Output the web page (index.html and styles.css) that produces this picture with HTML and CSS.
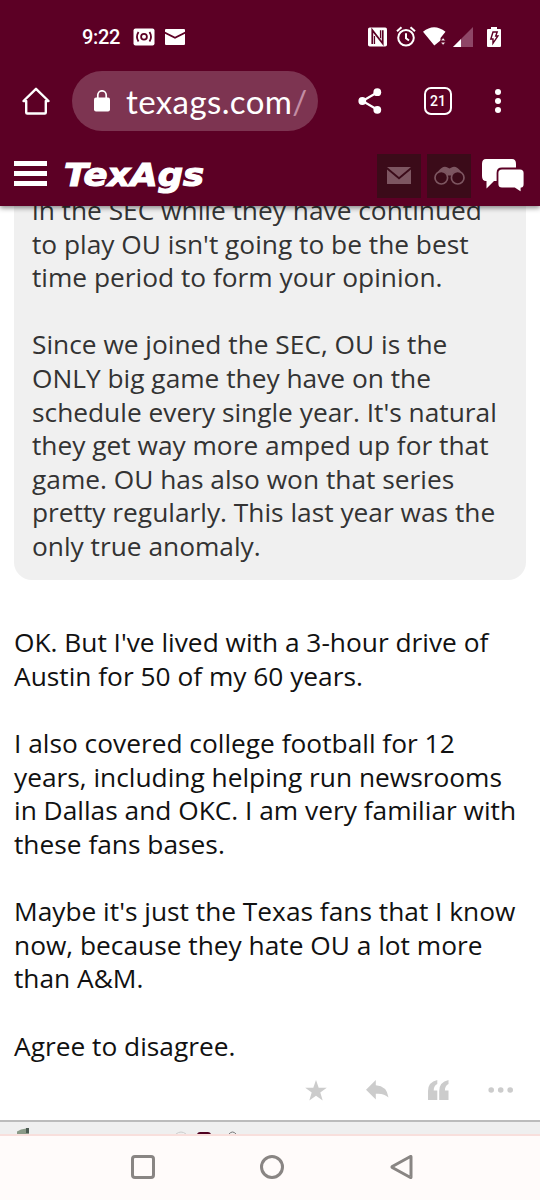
FILE: index.html
```html
<!DOCTYPE html>
<html lang="en">
<head>
  <meta charset="UTF-8">
  <meta name="viewport" content="width=device-width, initial-scale=1.0">
  <title>TexAgs</title>
  <link rel="stylesheet" href="styles.css">
</head>
<body>
  <header class="top">
    <div class="status-bar">
      <span class="clock">9:22</span>
      <svg class="cast" width="22" height="18" viewBox="0 0 22 18">
        <rect x="0.5" y="0.5" width="21" height="17" rx="2" fill="#fff"/>
        <g fill="none" stroke="#5c0025" stroke-width="1.8">
          <circle cx="11" cy="8.8" r="2.9"/>
          <path d="M5.500 4q-3 4.800 0 9.600M16.500 4q3 4.800 0 9.600"/>
        </g>
      </svg>
      <svg class="mail" width="20" height="16" viewBox="0 0 20 16">
        <path d="M1 0h18q1 0 1 1v1.8l-10 5-10-5V1q0-1 1-1zM0 4.7l10 5 10-5V15q0 1-1 1H1q-1 0-1-1z" fill="#fff"/>
      </svg>
      <svg class="nfc" width="19" height="20" viewBox="0 0 19 20">
        <rect y="0.5" width="19" height="19" rx="1.8" fill="#fff"/>
        <path d="M4.300 17V3.200L14.700 16.500V3.200" fill="none" stroke="#5c0025" stroke-width="1.8"/>
        <path d="M6.500 9v8M12.500 3.200v8" fill="none" stroke="#5c0025" stroke-width="1.2"/>
      </svg>
      <svg class="alarm" width="20" height="21" viewBox="0 0 20 21" fill="none" stroke="#fff" stroke-width="2">
        <circle cx="10" cy="11.8" r="7.8"/>
        <path d="M10 7.3v5l3 2.2M1 5.2l4.5-4M19 5.2l-4.5-4"/>
      </svg>
      <svg class="wifi" width="23" height="19" viewBox="0 0 23 19" fill="#fff">
        <path d="M0 4.8Q11 -4.2 22.5 4.8L17.5 11v2.5L11.3 18.5z"/>
        <path d="M17.8 13.8l2.3-3 2.3 3zM17.8 15.2h4.6l-2.3 3z" stroke="#5c0025" stroke-width="0.6"/>
      </svg>
      <svg class="signal" width="20" height="20" viewBox="0 0 20 20">
        <path d="M20 0v20H0z" fill="#8e4667"/>
        <path d="M8 12v8H0z" fill="#fff"/>
      </svg>
      <svg class="battery" width="14" height="20" viewBox="0 0 14 20">
        <path d="M4 0h6v2h3q1 0 1 1v16q0 1-1 1H1q-1 0-1-1V3q0-1 1-1h3z" fill="#fff"/>
        <path d="M6 5h4.2L8.7 9h2.2L6 16.3V12H3.8z" fill="none" stroke="#5c0025" stroke-width="1.4"/>
      </svg>
    </div>

    <div class="browser-bar">
      <svg class="home" width="28" height="28" viewBox="0 0 28 28" fill="none" stroke="#fff" stroke-width="2.4" stroke-linejoin="round">
        <path d="M1.5 14L14 1.8 26.5 14H23.8V25.5q0 1-1 1H5.2q-1 0-1-1V14z"/>
      </svg>
      <div class="url">
        <svg width="16" height="22" viewBox="0 0 16 22">
          <rect y="7.5" width="16" height="14" rx="2" fill="#fff"/>
          <path d="M3.8 9V5a4.2 4.2 0 0 1 8.4 0v4" fill="none" stroke="#fff" stroke-width="1.7"/>
        </svg>
        <span class="address">texags.com<span class="slash">/</span></span>
      </div>
      <svg class="share" width="24" height="26" viewBox="0 0 24 26" fill="#fff">
        <path d="M19.5 4.3L4.5 13l15 8.7" fill="none" stroke="#fff" stroke-width="2.2"/>
        <circle cx="19.3" cy="4.2" r="3.9"/>
        <circle cx="4.3" cy="13" r="3.9"/>
        <circle cx="19.3" cy="21.8" r="3.9"/>
      </svg>
      <span class="tabs">21</span>
      <svg class="more" width="6" height="26" viewBox="0 0 6 26" fill="#fff">
        <circle cx="3" cy="4" r="3"/>
        <circle cx="3" cy="13" r="3"/>
        <circle cx="3" cy="22" r="3"/>
      </svg>
    </div>

    <div class="site-bar">
      <div class="menu"><i></i><i></i><i></i></div>
      <svg class="logo" width="144" height="44" viewBox="0 0 144 44">
        <text x="1" y="32" textLength="140" lengthAdjust="spacingAndGlyphs">TexAgs</text>
      </svg>
      <div class="site-button">
        <svg width="24" height="17" viewBox="0 0 24 17">
          <path d="M0 0h24L12 10zM0 2.5L12 12.5 24 2.5V17H0z" fill="#7d5661"/>
        </svg>
      </div>
      <div class="site-button">
        <svg width="31" height="19" viewBox="0 0 31 19" fill="none" stroke="#7d5661">
          <circle cx="7.3" cy="11.700" r="6.300" stroke-width="1.700"/>
          <circle cx="23.700" cy="11.700" r="6.300" stroke-width="1.700"/>
          <path d="M4 5.500Q9 -1 13.500 1.500L15.500 2.500 17.500 1.500Q22 -1 27 5.500 20 3.500 17.500 9.500h-4Q11 3.500 4 5.500z" fill="#7d5661" stroke="none"/>
        </svg>
      </div>
      <svg class="chat" width="44" height="36" viewBox="0 0 44 36">
        <path d="M5 1h26q4 0 4 5v12q0 5-4 5H13l-7.500 7.500V23H5q-4 0-4-5V6q0-5 4-5z" fill="#fff"/>
        <path d="M21 10.500h18q4.500 0 4.500 4.500v11q0 4-3 4.500V35L33.500 30.500H21q-4.500 0-4.500-4.500V15q0-4.500 4.500-4.500z" fill="#fff" stroke="#5c0025" stroke-width="1.800"/>
      </svg>
    </div>
  </header>

  <main class="page">
    <article class="post">
      <blockquote class="quote">
        in the SEC while they have continued<br>
        to play OU isn't going to be the best<br>
        time period to form your opinion.<br>
        <br>
        Since we joined the SEC, OU is the<br>
        ONLY big game they have on the<br>
        schedule every single year. It's natural<br>
        they get way more amped up for that<br>
        game. OU has also won that series<br>
        pretty regularly. This last year was the<br>
        only true anomaly.
      </blockquote>
      <div class="reply">
        OK. But I've lived with a 3-hour drive of<br>
        Austin for 50 of my 60 years.<br>
        <br>
        I also covered college football for 12<br>
        years, including helping run newsrooms<br>
        in Dallas and OKC. I am very familiar with<br>
        these fans bases.<br>
        <br>
        Maybe it's just the Texas fans that I know<br>
        now, because they hate OU a lot more<br>
        than A&amp;M.<br>
        <br>
        Agree to disagree.
      </div>
      <div class="actions">
        <svg width="22" height="21" viewBox="0 0 22 21"><path d="M11 0l2.700 7.700h8.100l-6.500 4.900 2.400 7.900L11 15.800l-6.700 4.700 2.400-7.900L.2 7.700h8.100z"/></svg>
        <svg width="23" height="20" viewBox="0 0 23 20"><path d="M0 9.800L9.800 0v5.300Q21 6 22.500 17.500 18 13 9.800 13.800V19.500z"/></svg>
        <svg width="21" height="20" viewBox="0 0 21 20"><path d="M9.300 0v4Q5.700 5.500 5.700 10.500h3.600V20H0v-9Q0 2 9.300 0zM20.500 0v4q-3.600 1.500-3.600 6.500h3.600V20h-9.300v-9q0-9 9.300-11z"/></svg>
        <svg width="26" height="6" viewBox="0 0 26 6"><circle cx="3.200" cy="3" r="2.800"/><circle cx="12.700" cy="3" r="2.800"/><circle cx="22.200" cy="3" r="2.800"/></svg>
      </div>
    </article>
    <div class="next-post">
      <svg class="avatar" width="12" height="6" viewBox="0 0 12 6">
        <path d="M0 6V3.500L4 1.500 12 0v6z" fill="#8a9a88"/>
        <path d="M9 0h3v5H9z" fill="#4c5b52"/>
      </svg>
      <svg class="badges" width="64" height="3" viewBox="0 0 64 3" fill="none">
        <path d="M1 3q5-4 10 0" stroke="#ccc"/>
        <path d="M22 3q1-2 3-2h8q2 0 3 2z" fill="#500020"/>
        <path d="M54 3q3.500-4 7 0" stroke="#777"/>
      </svg>
    </div>
  </main>

  <nav class="nav-bar">
    <svg width="24" height="24" viewBox="0 0 24 24"><rect x="1.500" y="1.500" width="21" height="21" rx="2.500"/></svg>
    <svg width="24" height="24" viewBox="0 0 24 24"><circle cx="12" cy="12" r="10.500"/></svg>
    <svg width="24" height="24" viewBox="0 0 24 24"><path d="M22 1.800v20.400q0 .6-.6.300L3.300 12.500q-.7-.5 0-1L21.400 1.500q.6-.3.600.3z"/></svg>
  </nav>
</body>
</html>
```
FILE: styles.css
```css
* {
  box-sizing: border-box;
}
body {
  margin: 0;
  height: 1200px;
  display: flex;
  flex-direction: column;
  overflow: hidden;
  background: #fff;
  font-family: "Open Sans", "Noto Sans", sans-serif;
}
svg {
  display: block;
  flex: none;
}
.top {
  position: relative;
  flex: none;
  height: 206px;
  background: #5c0025;
  color: #fff;
  box-shadow: 0 2px 5px rgba(0, 0, 0, 0.45);
}

/* phone status bar */
.status-bar {
  display: flex;
  align-items: center;
  height: 71px;
  padding: 2px 39px 0 82px;
}
.clock {
  width: 51px;
  font: 500 20px/24px Roboto, sans-serif;
  letter-spacing: -0.3px;
}
.mail {
  margin-left: 10px;
}
.nfc {
  margin-left: auto;
}
.alarm {
  margin-left: 9px;
}
.wifi {
  margin-left: 7px;
}
.signal {
  margin-left: 7px;
}
.battery {
  margin-left: 14px;
}

/* browser toolbar */
.browser-bar {
  display: flex;
  align-items: center;
  height: 60px;
  padding-left: 22px;
}
.url {
  display: flex;
  align-items: center;
  width: 246px;
  height: 60px;
  margin-left: 22px;
  padding-left: 22px;
  border-radius: 30px;
  background: #7d3451;
}
.address {
  margin: 0 0 0 16px;
  font: 33px/40px Lato, sans-serif;
  letter-spacing: 0.400px;
  white-space: nowrap;
}
.slash {
  color: #c38da4;
}
.share {
  margin-left: 40px;
}
.tabs {
  width: 28px;
  height: 28px;
  margin-left: 42px;
  border: 2.500px solid #fff;
  border-radius: 7px;
  font: 500 14px/24px Roboto, sans-serif;
  text-align: center;
}
.more {
  margin-left: 43px;
}

/* site header */
.site-bar {
  display: flex;
  align-items: center;
  height: 75px;
  padding: 14px 15px 0 14px;
}
.menu {
  display: grid;
  gap: 5px;
  width: 33px;
  margin-top: -5px;
}
.menu i {
  height: 5px;
  background: #fff;
}
.logo {
  margin: 0 auto 0 16px;
}
.logo text {
  fill: #fff;
  stroke: #fff;
  stroke-width: 1.200px;
  font: italic bold 32px "DejaVu Sans", sans-serif;
}
.site-button {
  display: flex;
  align-items: center;
  justify-content: center;
  width: 44px;
  height: 44px;
  margin-right: 6px;
  background: #3b0b19;
}
.chat {
  margin-left: 4px;
}

/* thread */
.page {
  flex: 1;
  min-height: 0;
  overflow: hidden;
}
.post {
  display: flow-root;
  height: 914px;
  color: #111;
  font-size: 26.300px;
  line-height: 33.600px;
  white-space: nowrap;
}
.quote {
  margin: -40px 14px 0;
  padding: 28px 18px 16.500px;
  border-radius: 18px;
  background: #f0f0f0;
  color: #333;
}
.reply {
  padding: 46.400px 14px 0;
}
.actions {
  display: flex;
  align-items: center;
  gap: 39px;
  margin-top: 16.600px;
  padding-left: 305px;
  fill: #ccc;
}
.next-post {
  display: flex;
  align-items: flex-end;
  height: 14px;
  padding-left: 17px;
  border-top: 2px solid #bbb;
  background: #efefef;
}
.badges {
  margin-left: 146px;
}

/* android navigation */
.nav-bar {
  display: flex;
  justify-content: center;
  gap: 105px;
  flex: none;
  height: 66px;
  padding: 19px 0 0 4px;
  border-top: 2px solid #f8dfdc;
  background: #fffbfa;
  fill: none;
  stroke: #898583;
  stroke-width: 3;
}
```
